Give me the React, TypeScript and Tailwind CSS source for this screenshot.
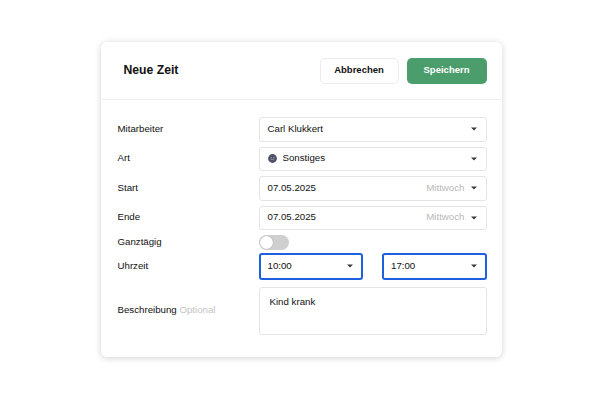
import React from 'react';

function Chevron() {
  return (
    <svg width="6" height="4" viewBox="0 0 6 4" className="shrink-0">
      <path d="M0 0.5h6L3 3.5z" fill="#3a3a3a" />
    </svg>
  );
}

function SelectBox({ children, right, focused }: { children: React.ReactNode; right?: string; focused?: boolean }) {
  return (
    <div
      className={
        focused
          ? 'flex h-full items-center rounded-[3px] border-2 border-[#1f5fe0] bg-white pl-[7px] pr-[8px]'
          : 'flex h-full items-center rounded-[3px] border border-[#e4e4e4] bg-white pl-[8px] pr-[9px]'
      }
    >
      <div className="flex min-w-0 flex-1 items-center gap-[6px] text-[9.7px] text-[#111]">{children}</div>
      {right && <span className="mr-[6px] text-[9.7px] text-[#b8b8b8]">{right}</span>}
      <Chevron />
    </div>
  );
}

function Row({ label, children, className }: { label: React.ReactNode; children: React.ReactNode; className: string }) {
  return (
    <div className={`flex items-center ${className}`}>
      <div className="w-[141px] shrink-0 text-[9.7px] text-[#111]">{label}</div>
      <div className="h-full flex-1">{children}</div>
    </div>
  );
}

export default function App() {
  return (
    <div
      className="flex h-[401px] w-[602px] justify-center bg-white pt-[42px]"
      style={{ fontFamily: '"Liberation Sans", Arial, sans-serif' }}
    >
      <div className="h-[315px] w-[401px] rounded-[6px] bg-white shadow-[0_1px_7px_rgba(0,0,0,0.18)]">
        <div className="flex h-[58px] items-center border-b border-[#f0f0f0] pl-[23px] pr-[15px]">
          <h1 className="flex-1 text-[12.2px] font-bold text-[#111]">Neue Zeit</h1>
          <button className="h-[26px] w-[79px] rounded-[5px] border border-[#ececec] bg-white text-[9.5px] font-bold text-[#111]">
            Abbrechen
          </button>
          <button className="ml-[8px] h-[26px] w-[80px] rounded-[5px] bg-[#4b9e6c] text-[9.5px] font-bold text-white">
            Speichern
          </button>
        </div>

        <div className="flex flex-col pb-[23px] pl-[17px] pr-[15px] pt-[17px]">
          <Row label="Mitarbeiter" className="h-[24.5px]">
            <SelectBox>Carl Klukkert</SelectBox>
          </Row>
          <Row label="Art" className="mt-[5px] h-[24.5px]">
            <SelectBox>
              <svg width="9" height="9" viewBox="0 0 9 9" className="shrink-0">
                <circle cx="4.5" cy="4.5" r="4.4" fill="#4d5166" />
                <path d="M2.6 4.8q1.9 1.6 3.8 0" stroke="#a9adbf" strokeWidth="0.8" fill="none" />
                <circle cx="3.2" cy="3.4" r="0.5" fill="#a9adbf" />
                <circle cx="5.8" cy="3.4" r="0.5" fill="#a9adbf" />
              </svg>
              <span>Sonstiges</span>
            </SelectBox>
          </Row>
          <Row label="Start" className="mt-[5px] h-[24.5px]">
            <SelectBox right="Mittwoch">07.05.2025</SelectBox>
          </Row>
          <Row label="Ende" className="mt-[5px] h-[24.5px]">
            <SelectBox right="Mittwoch">07.05.2025</SelectBox>
          </Row>
          <Row label="Ganztägig" className="mt-[4.5px] h-[15px]">
            <div className="flex h-[15px] w-[30px] items-center rounded-full bg-[#cfcfcf] px-[1px]">
              <div className="h-[13px] w-[13px] rounded-full bg-white shadow-[0_0_1px_rgba(0,0,0,0.35)]" />
            </div>
          </Row>
          <Row label="Uhrzeit" className="mt-[3px] h-[27px]">
            <div className="grid h-full grid-cols-2 gap-[19px]">
              <SelectBox focused>10:00</SelectBox>
              <SelectBox focused>17:00</SelectBox>
            </div>
          </Row>
          <Row
            label={
              <>
                Beschreibung <span className="text-[#c4c4c4]">Optional</span>
              </>
            }
            className="mt-[7px] h-[48px]"
          >
            <div className="h-full rounded-[3px] border border-[#e4e4e4] bg-white px-[10px] pt-[7px] text-[9.7px] text-[#111]">
              Kind krank
            </div>
          </Row>
        </div>
      </div>
    </div>
  );
}
